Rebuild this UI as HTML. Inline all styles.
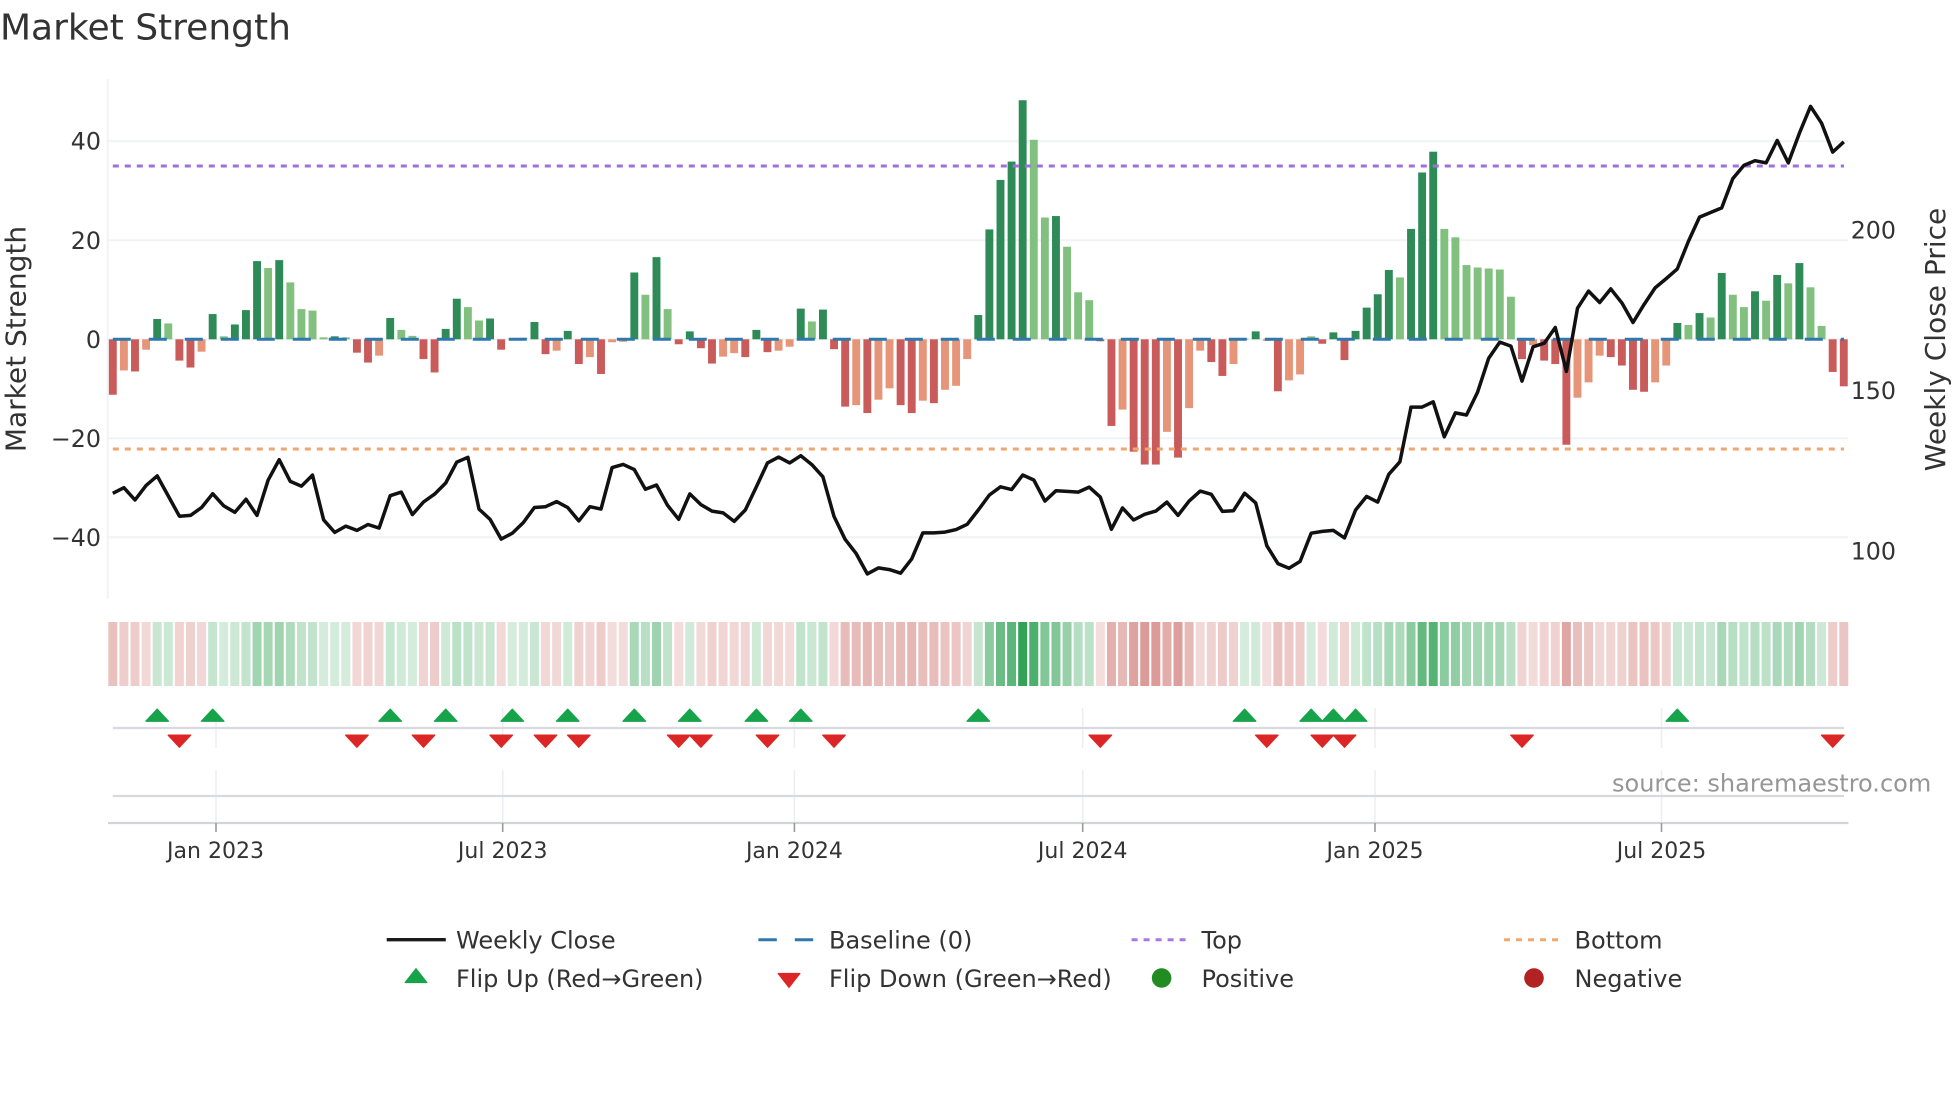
<!DOCTYPE html>
<html lang="en">
<head>
<meta charset="utf-8">
<title>Market Strength</title>
<style>
html,body{margin:0;padding:0;background:#fff;width:1960px;height:1102px;overflow:hidden}
svg{display:block}
text{font-family:"DejaVu Sans","Liberation Sans",sans-serif;fill:#333}
.yt{font-size:23.75px}
.xt{font-size:22px;text-anchor:middle}
.lg{font-size:24px}
</style>
</head>
<body>
<svg id="c" xmlns="http://www.w3.org/2000/svg" width="1960" height="1102" viewBox="0 0 1960 1102">
<rect width="1960" height="1102" fill="#fff"/>
<g id="grid" stroke="#f0f2f6" stroke-width="2" fill="none">
<path d="M107.7 79V598"/>
<path d="M108 141.3H1848M108 240.3H1848M108 339.3H1848M108 438.3H1848M108 537.3H1848"/>
</g>
<g id="bars"></g>
<g fill="none">
<path d="M112.8 339.3H1844" stroke="#2f78ad" stroke-width="3" stroke-dasharray="18 18"/>
<path d="M112.8 166H1844" stroke="#a06fdc" stroke-width="3" stroke-dasharray="6 6"/>
<path d="M112.8 449H1844" stroke="#efa670" stroke-width="3" stroke-dasharray="6 6"/>
<path id="price" stroke="#111" stroke-width="3.5" stroke-linejoin="round"/>
</g>
<g id="strip"></g>
<g stroke="#eceef3" stroke-width="1.5" fill="none">
<path d="M216 708V748M216 770V822M502.7 708V748M502.7 770V822M794.4 708V748M794.4 770V822M1082.7 708V748M1082.7 770V822M1375 708V748M1375 770V822M1661.5 708V748M1661.5 770V822"/>
</g>
<g stroke="#d8dadf" stroke-width="2.2" fill="none">
<path d="M112.8 728H1844M112.8 796H1844"/>
<path d="M108 823H1848.5" stroke="#d2d4d8"/>
</g>
<path d="M216 823V832M502.7 823V832M794.4 823V832M1082.7 823V832M1375 823V832M1661.5 823V832" stroke="#9a9a9a" stroke-width="1.6" fill="none"/>
<g id="flips"></g>

<text x="0" y="39.5" font-size="36">Market Strength</text>
<text transform="translate(25.5,339) rotate(-90)" font-size="28" text-anchor="middle">Market Strength</text>
<text transform="translate(1945,339.5) rotate(-90)" font-size="28" text-anchor="middle">Weekly Close Price</text>

<g text-anchor="end">
<text class="yt" x="101" y="149.4">40</text>
<text class="yt" x="101" y="249">20</text>
<text class="yt" x="101" y="348">0</text>
<text class="yt" x="101" y="447">−20</text>
<text class="yt" x="101" y="546">−40</text>
</g>
<text class="yt" x="1850.7" y="238.6">200</text>
<text class="yt" x="1850.7" y="399">150</text>
<text class="yt" x="1850.7" y="559.3">100</text>

<text class="xt" x="215.5" y="858">Jan 2023</text>
<text class="xt" x="502.7" y="858">Jul 2023</text>
<text class="xt" x="794.4" y="858">Jan 2024</text>
<text class="xt" x="1082.7" y="858">Jul 2024</text>
<text class="xt" x="1375" y="858">Jan 2025</text>
<text class="xt" x="1661.5" y="858">Jul 2025</text>

<text x="1612" y="791.7" font-size="24" style="fill:#969696">source: sharemaestro.com</text>

<path d="M386.7 939.7H445.8" stroke="#1a1a1a" stroke-width="3.4"/>
<path d="M758.4 939.7H776.8M794.8 939.7H813.2" stroke="#2f78ad" stroke-width="3"/>
<path d="M1131.6 939.7H1186.3" stroke="#a878e0" stroke-width="3" stroke-dasharray="6 6"/>
<path d="M1504 939.7H1558.7" stroke="#f0a86e" stroke-width="3" stroke-dasharray="6 6"/>
<polygon points="416,968.5 427,982.6 405,982.6" fill="#16a34a" stroke="#16a34a" stroke-width="1" stroke-linejoin="round"/>
<polygon points="789,987.6 778,973.4 800,973.4" fill="#dc2626" stroke="#dc2626" stroke-width="1" stroke-linejoin="round"/>
<circle cx="1161.6" cy="978" r="9.8" fill="#228b22"/>
<circle cx="1534" cy="978" r="9.8" fill="#b22222"/>
<text class="lg" x="456" y="948.3">Weekly Close</text>
<text class="lg" x="829" y="948.3">Baseline (0)</text>
<text class="lg" x="1201.5" y="948.3">Top</text>
<text class="lg" x="1574.5" y="948.3">Bottom</text>
<text class="lg" x="456" y="987">Flip Up (Red→Green)</text>
<text class="lg" x="829" y="987">Flip Down (Green→Red)</text>
<text class="lg" x="1201.5" y="987">Positive</text>
<text class="lg" x="1574.5" y="987">Negative</text>
</svg>
<script>
(function(){
var NS="http://www.w3.org/2000/svg";
function el(par,name,attrs){var e=document.createElementNS(NS,name);for(var k in attrs)e.setAttribute(k,attrs[k]);document.getElementById(par).appendChild(e);return e;}
var X0=112.8,DX=11.096,Y0=339.3,U=4.95;
var data="-11.2,-6.3l,-6.5,-2.1l,4.1,3.2l,-4.3,-5.7,-2.5l,5.1,.6l,3,5.9,15.8,14.4l,16,11.5l,6.1l,5.8l,.4l,.6,.4l,-2.7,-4.7,-3.3l,4.3,1.9l,.7l,-4,-6.7,2.1,8.2,6.5l,3.8l,4.2,-2.1,.1,.3l,3.5,-3,-2.3l,1.7,-5,-3.6l,-7,-.6l,-.5l,13.5,9l,16.6,6.1l,-1,1.6,-1.8,-4.9,-3.5l,-2.8l,-3.6,1.9,-2.6,-2.3l,-1.5l,6.2,3.6l,6,-2,-13.6,-13.3l,-14.9,-12.2l,-9.9l,-13.3,-14.9,-12.4l,-12.9,-10.2l,-9.4l,-4l,4.9,22.2,32.2,35.9,48.3,40.3l,24.6l,24.9,18.7l,9.5l,7.9l,-.4,-17.5,-14.2l,-22.7,-25.3,-25.3,-18.7l,-23.9,-13.9l,-2.3l,-4.6,-7.4,-5l,.1,1.6,-.3l,-10.5,-8.3l,-7.1l,.6l,-.9,1.4,-4.2,1.7,6.4,9.1,14,12.5l,22.3,33.7,37.9,22.3l,20.6l,15l,14.5l,14.3l,14.1l,8.6l,-4,-1.2l,-4.3,-5,-21.3,-11.8l,-8.7l,-3.3l,-3.6,-5.3,-10.2,-10.6,-8.7l,-5.3l,3.3,2.9l,5.3,4.4l,13.4,9l,6.5l,9.7,7.8l,13,11.3l,15.4,10.5l,2.7l,-6.6,-9.5".split(",");
data.forEach(function(s,i){
  var v=parseFloat(s),l=s.charAt(s.length-1)==="l",x=X0+DX*i;
  var top=v>=0?Y0-v*U:Y0,h=Math.abs(v)*U;
  var col=v>=0?(l?"#81c07e":"#2e8b57"):(l?"#e69578":"#c95b5b");
  el("bars","rect",{x:(x-3.95).toFixed(2),y:top.toFixed(2),width:"7.9",height:h.toFixed(2),fill:col});
  var a=0.2+0.8*Math.abs(v)/48.3;
  var b=v>=0?[50,163,86]:[198,94,88];
  var c=b.map(function(n){return Math.round(255-a*(255-n));});
  el("strip","rect",{x:(x-4.5).toFixed(2),y:"622",width:"9",height:"64",fill:"rgb("+c.join(",")+")"});
});
var pa=[1248,1234,1265,1228,1204,1255,1306,1304,1284,1249,1280,1296,1263,1304,1215,1163,1218,1230,1202,1315,1347,1331,1342,1327,1336,1254,1245,1302,1270,1250,1222,1169,1157,1288,1314,1364,1349,1322,1284,1282,1269,1284,1318,1282,1288,1183,1175,1188,1238];
var pb=[1190,1247,1286,1215,1245,1263,1268,1292,1260,1195,1128,1112,1128,1108,1133,1167,1278,1342,1382,1439,1422,1427,1437,1397,1324,1324,1322,1315,1300,1260,1218,1195,1203,1162,1176,1235,1206,1208,1210,1196,1224,1314,1254,1288,1272,1263,1238,1275,1235,1207,1216,1264,1262,1213,1240,1360,1410,1423,1404,1325,1320,1317,1338,1260,1222,1238,1160,1125,972,972,957,1055,988,994,930,835,790,801,899,803,793,749,872,695,647,679,641,680,735,685,638,612,585,508,440,427,414,332,295,282,288,225,288,205,130,177,258,229];
var ys=pa.map(function(z){return z/2.53;}).concat(pb.map(function(z){return 60+z/2.8;}));
document.getElementById("price").setAttribute("d",ys.map(function(y,i){return (i?"L":"M")+(X0+DX*i).toFixed(1)+" "+y.toFixed(1);}).join(""));
[4,9,25,30,36,41,47,52,58,62,78,102,108,110,112,141].forEach(function(i){
  var x=X0+DX*i;
  el("flips","polygon",{points:x.toFixed(1)+",709.2 "+(x+11.2).toFixed(1)+",721.2 "+(x-11.2).toFixed(1)+",721.2",fill:"#16a34a",stroke:"#16a34a","stroke-width":"1.4","stroke-linejoin":"round"});
});
[6,22,28,35,39,42,51,53,59,65,89,104,109,111,127,155].forEach(function(i){
  var x=X0+DX*i;
  el("flips","polygon",{points:(x-11.2).toFixed(1)+",735.2 "+(x+11.2).toFixed(1)+",735.2 "+x.toFixed(1)+",747.2",fill:"#dc2626",stroke:"#dc2626","stroke-width":"1.4","stroke-linejoin":"round"});
});
})();
</script>
</body>
</html>
